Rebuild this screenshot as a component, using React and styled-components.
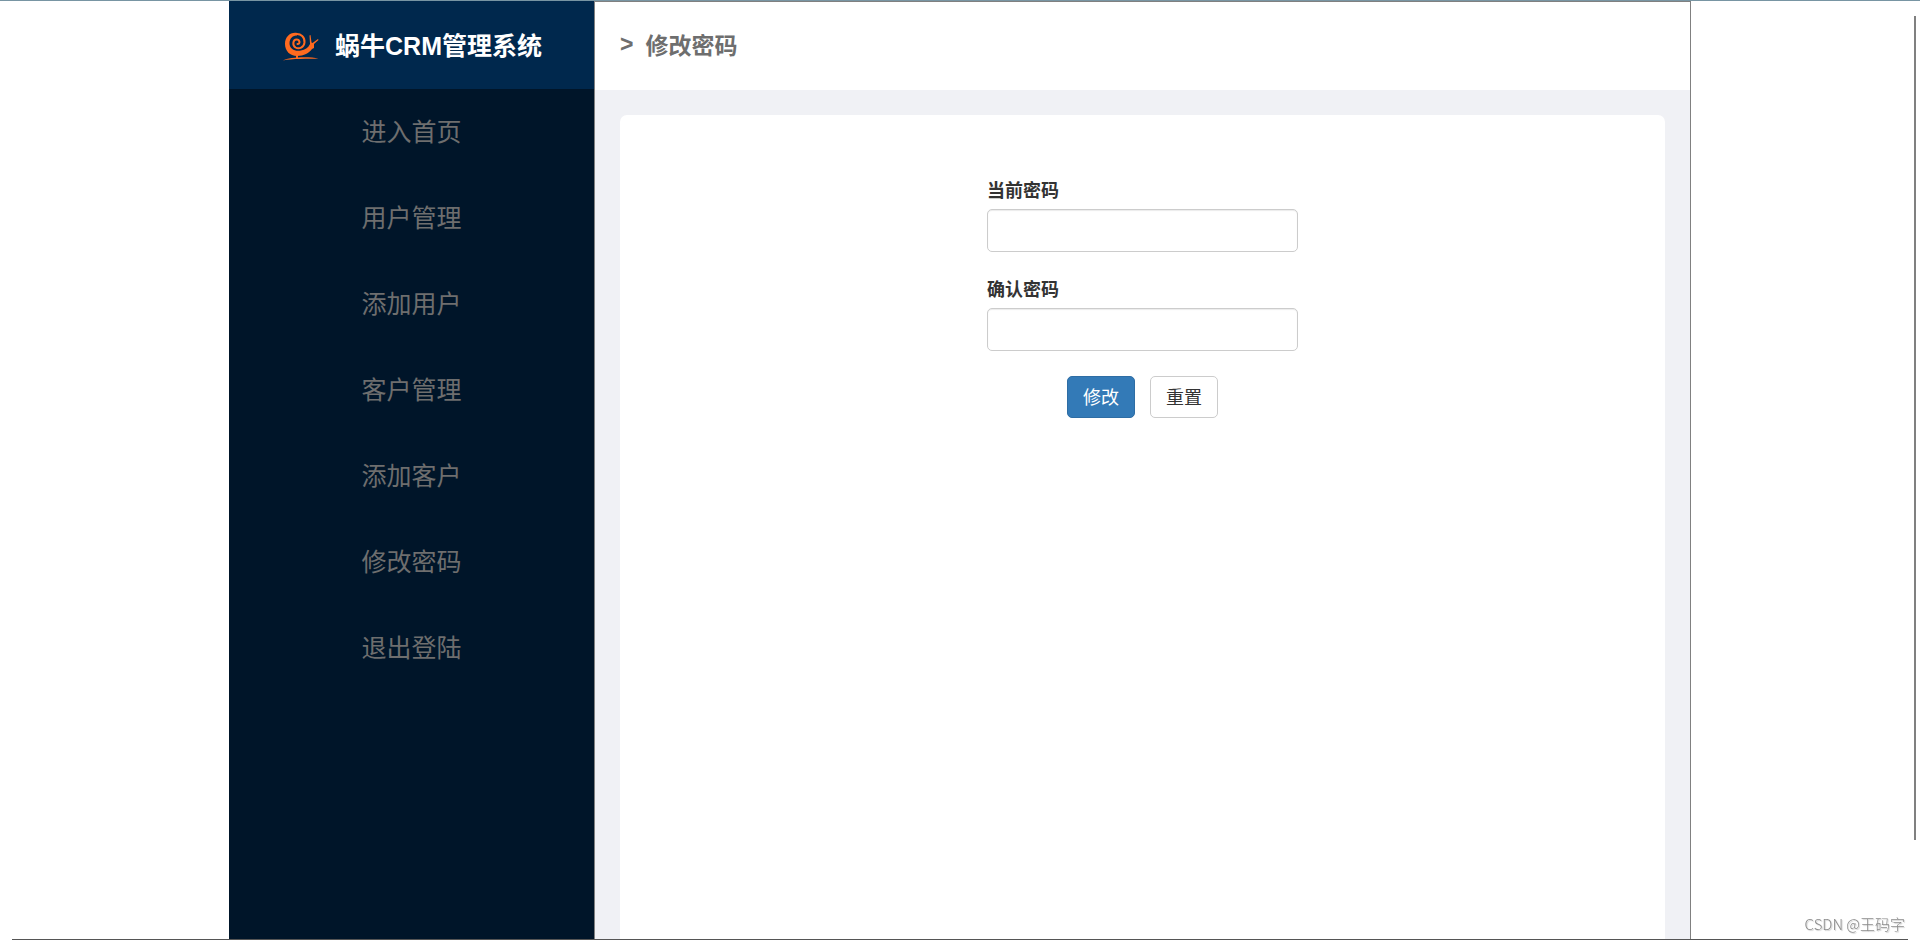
import React from "react";
import styled, { createGlobalStyle } from "styled-components";

const GlobalStyle = createGlobalStyle`
  * {
    box-sizing: border-box;
  }
  body {
    margin: 0;
    overflow: hidden;
    background: #fff;
    color: #333;
    font-family: "Liberation Sans", "Noto Sans CJK SC", sans-serif;
    font-size: 18px;
  }
`;

const Page = styled.div`
  min-height: 100vh;
  display: flex;
  justify-content: center;
  border-top: 1px solid #7895a3;
`;

const Layout = styled.div`
  width: 100%;
  max-width: 1462px;
  display: flex;
`;

const Sidebar = styled.aside`
  flex: 1;
  background: #001529;
`;

const Brand = styled.div`
  display: flex;
  justify-content: center;
  align-items: center;
  gap: 16px;
  height: 88px;
  padding: 2px 0 0 2px;
  background: #00284d;
`;

const BrandTitle = styled.h1`
  margin: 0;
  color: #fff;
  font-size: 25px;
  font-weight: 700;
  line-height: 36px;
`;

const Menu = styled.ul`
  list-style: none;
  margin: 0;
  padding: 0;
`;

const MenuLink = styled.a`
  display: block;
  color: #6e6e6e;
  font-size: 25px;
  line-height: 86px;
  text-align: center;
  text-decoration: none;
  &:hover {
    color: #fff;
  }
`;

const Main = styled.main`
  flex: 3;
  display: flex;
  flex-direction: column;
  border: 1px solid #808080;
  border-bottom: none;
  background: #f0f1f5;
`;

const Header = styled.header`
  display: flex;
  align-items: center;
  gap: 12px;
  height: 88px;
  padding: 0 25px 4px;
  background: #fff;
  color: #6e6e6e;
  font-size: 23px;
  font-weight: 700;
`;

const HeaderTitle = styled.h2`
  margin: 0;
  font-size: 23px;
  font-weight: 700;
`;

const Card = styled.section`
  flex: 1;
  margin: 25px 25px 0;
  padding: 63px 25px;
  background: #fff;
  border-radius: 7px 7px 0 0;
`;

const Form = styled.form`
  width: 30%;
  min-width: 311px;
  margin: 0 auto;
`;

const Field = styled.div`
  margin-bottom: 25px;
`;

const Label = styled.label`
  display: block;
  margin-bottom: 5px;
  font-weight: 700;
  line-height: 26px;
`;

const Input = styled.input`
  display: block;
  width: 100%;
  height: 43px;
  padding: 8px 15px;
  border: 1px solid #ccc;
  border-radius: 5px;
  box-shadow: inset 0 1px 1px rgba(0, 0, 0, 0.08);
  font: inherit;
`;

const Buttons = styled.div`
  display: flex;
  justify-content: center;
  gap: 15px;
`;

const Button = styled.button`
  height: 42px;
  padding: 0 15px 2px;
  border: 1px solid ${({ $primary }) => ($primary ? "#2e6da4" : "#ccc")};
  border-radius: 5px;
  background: ${({ $primary }) => ($primary ? "#337ab7" : "#fff")};
  color: ${({ $primary }) => ($primary ? "#fff" : "#333")};
  font: inherit;
  cursor: pointer;
`;

const BottomLine = styled.div`
  position: fixed;
  bottom: 0;
  left: 12px;
  right: 12px;
  height: 1px;
  background: #555;
`;

const ScrollThumb = styled.div`
  position: fixed;
  top: 16px;
  right: 4px;
  bottom: 100px;
  width: 2px;
  background: #808080;
`;

const Watermark = styled.span`
  position: fixed;
  right: 15px;
  bottom: 4px;
  color: #8c8c8c;
  font-family: "Noto Sans CJK SC", sans-serif;
  font-size: 15px;
  font-weight: 300;
  line-height: 24px;
  text-shadow: 1px 1px 1px #ccc;
`;

const links = [
  "进入首页",
  "用户管理",
  "添加用户",
  "客户管理",
  "添加客户",
  "修改密码",
  "退出登陆",
];

const SnailLogo = () => (
  <svg width="36" height="30" viewBox="3 3 36 30" aria-hidden="true">
    <path
      fill="#ff6a1f"
      d="M17 5C10 4 5 9 5 16C5 23 10 28 17 28C24 28 29 25 32 21L34 20L34 16L38.500 12L38 11L32.500 15L31.500 14.500L30.500 7L29.500 7.500L30 16C28 20 25 22 21 22.500C15 24 9.500 20.500 9.500 15.500C9.500 10 13 7.500 17 7.500Z"
    />
    <path
      fill="none"
      stroke="#ff6a1f"
      strokeWidth="2"
      strokeLinecap="round"
      d="M15 6.200C21 5 25 9.500 24.500 14.500C24 19.500 19 21.500 15.500 19.500C12 17 13 11.500 16.500 11.500C20 11.500 20.500 16 17.500 16"
    />
    <path fill="#ff6a1f" d="M16 27H18V30H16Z" />
    <path
      fill="#ff6a1f"
      d="M3 32.500C9 29 29 28.500 38.500 30.500C29 31 11 30.500 3 32.500Z"
    />
  </svg>
);

const App = () => {
  return (
    <>
      <GlobalStyle />
      <Page>
        <Layout>
          <Sidebar>
            <Brand>
              <SnailLogo />
              <BrandTitle>蜗牛CRM管理系统</BrandTitle>
            </Brand>
            <nav>
              <Menu>
                {links.map((link) => (
                  <li key={link}>
                    <MenuLink href="#">{link}</MenuLink>
                  </li>
                ))}
              </Menu>
            </nav>
          </Sidebar>
          <Main>
            <Header>
              <span>&gt;</span>
              <HeaderTitle>修改密码</HeaderTitle>
            </Header>
            <Card>
              <Form onSubmit={(e) => e.preventDefault()}>
                <Field>
                  <Label htmlFor="current">当前密码</Label>
                  <Input id="current" type="password" />
                </Field>
                <Field>
                  <Label htmlFor="confirm">确认密码</Label>
                  <Input id="confirm" type="password" />
                </Field>
                <Buttons>
                  <Button $primary type="submit">
                    修改
                  </Button>
                  <Button type="reset">重置</Button>
                </Buttons>
              </Form>
            </Card>
          </Main>
        </Layout>
      </Page>
      <BottomLine />
      <ScrollThumb />
      <Watermark>CSDN @王码字</Watermark>
    </>
  );
};

export default App;
